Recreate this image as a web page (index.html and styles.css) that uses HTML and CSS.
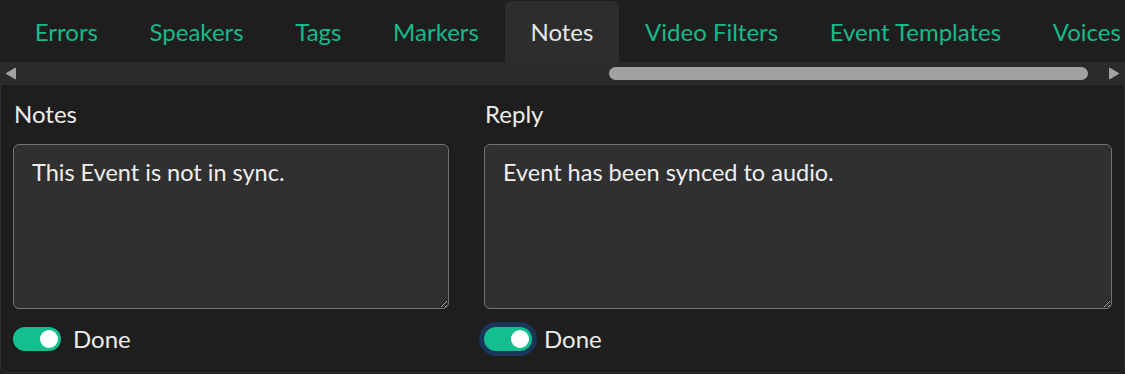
FILE: index.html
```html
<!DOCTYPE html>
<html lang="en">
<head>
<meta charset="utf-8">
<title>Notes</title>
<link rel="stylesheet" href="styles.css">
</head>
<body>
<div class="app">
  <nav class="tabs">
    <div class="tab">Errors</div>
    <div class="tab">Speakers</div>
    <div class="tab">Tags</div>
    <div class="tab">Markers</div>
    <div class="tab active">Notes</div>
    <div class="tab">Video Filters</div>
    <div class="tab">Event Templates</div>
    <div class="tab">Voices</div>
  </nav>
  <div class="scrollbar">
    <div class="arrow">
      <svg width="11" height="13" viewBox="0 0 11 13"><path d="M0.5 6.5 L10 0.8 Q11 0.3 11 1.4 L11 11.6 Q11 12.7 10 12.2 Z" fill="#a3a3a3"/></svg>
    </div>
    <div class="track">
      <div class="thumb" style="margin-left: 588px; width: 479px;"></div>
    </div>
    <div class="arrow">
      <svg width="11" height="13" viewBox="0 0 11 13"><path d="M10.5 6.5 L1 0.8 Q0 0.3 0 1.4 L0 11.6 Q0 12.7 1 12.2 Z" fill="#a3a3a3"/></svg>
    </div>
  </div>
  <section class="panel">
    <div class="col col-notes">
      <label class="label">Notes</label>
      <textarea class="field">This Event is not in sync.</textarea>
      <div class="toggle-row">
        <span class="switch"><span class="knob"></span></span>
        <span class="toggle-label">Done</span>
      </div>
    </div>
    <div class="col col-reply">
      <label class="label">Reply</label>
      <textarea class="field">Event has been synced to audio.</textarea>
      <div class="toggle-row">
        <span class="switch focused"><span class="knob"></span></span>
        <span class="toggle-label">Done</span>
      </div>
    </div>
  </section>
</div>
</body>
</html>
```

FILE: styles.css
```css
* { box-sizing: border-box; }
html, body {
  margin: 0;
  padding: 0;
  background: #1e1e1e;
}
body {
  font-family: "Lato", "Noto Sans", sans-serif;
  color: #ececec;
  overflow: hidden;
}
.app {
  width: 1125px;
  height: 374px;
  display: flex;
  flex-direction: column;
}
.tabs {
  display: flex;
  height: 62px;
  padding: 1px 0 0 9px;
  overflow: hidden;
  white-space: nowrap;
}
.tab {
  flex: none;
  padding: 0 25.8px;
  height: 61px;
  line-height: 62px;
  font-size: 24px;
  color: #17b98b;
  border-radius: 6px 6px 0 0;
}
.tab.active {
  background: #2d2d2d;
  color: #e6e6e6;
}
.scrollbar {
  display: flex;
  align-items: center;
  height: 23px;
  background: #2b2b2b;
}
.arrow {
  flex: none;
  width: 21px;
  display: flex;
  justify-content: center;
  align-items: center;
}
.arrow svg { display: block; }
.track {
  flex: 1;
  display: flex;
  align-items: center;
}
.thumb {
  height: 13px;
  border-radius: 7px;
  background: #a1a1a1;
}
.panel {
  flex: 1;
  display: grid;
  grid-template-columns: 436px 628px;
  grid-template-rows: max-content;
  column-gap: 35px;
  padding: 14px 0 0 12px;
  border: 1px solid #2e2e2e;
  border-top: none;
  border-radius: 0 0 7px 7px;
  margin-bottom: 1px;
}
.col {
  display: flex;
  flex-direction: column;
}
.label {
  font-size: 24px;
  line-height: 29px;
  color: #ececec;
  margin-left: 1px;
}
.field {
  color-scheme: dark;
  margin-top: 16px;
  height: 165px;
  width: 100%;
  resize: vertical;
  background: #303030;
  border: 1px solid #727272;
  border-radius: 6px;
  padding: 13px 18px 12px;
  font-family: "Lato", "Noto Sans", sans-serif;
  font-size: 23.5px;
  line-height: 28px;
  color: #eeeeee;
  outline: none;
}
.toggle-row {
  display: flex;
  align-items: center;
  gap: 12px;
  margin-top: 18px;
}
.switch {
  flex: none;
  width: 48px;
  height: 24px;
  border-radius: 12px;
  background: #13bf8e;
  display: flex;
  justify-content: flex-end;
  align-items: center;
  padding-right: 3px;
}
.switch.focused {
  box-shadow: 0 0 0 5px #1b3558;
}
.knob {
  width: 18px;
  height: 18px;
  border-radius: 50%;
  background: #ffffff;
}
.toggle-label {
  font-size: 24px;
  line-height: 24px;
  color: #ececec;
}
```
